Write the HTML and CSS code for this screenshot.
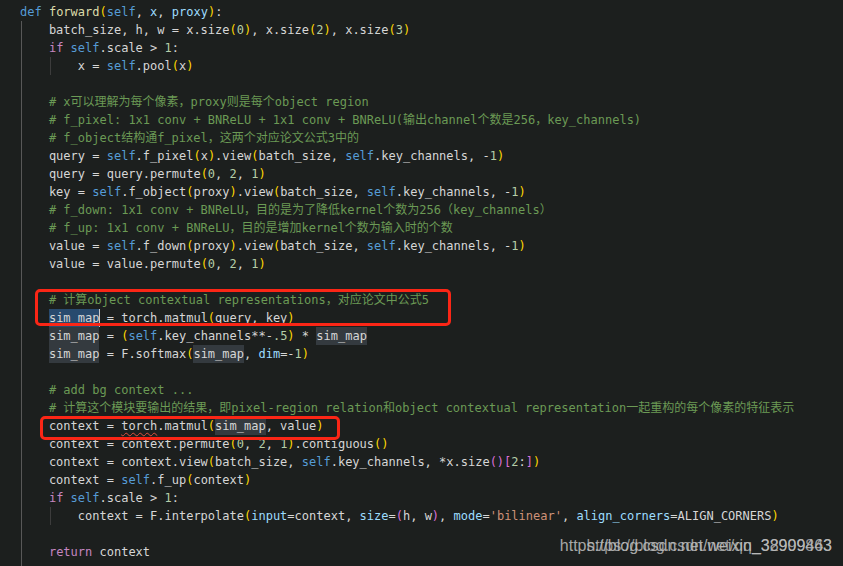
FILE: index.html
```html
<!DOCTYPE html>
<html>
<head>
<meta charset="utf-8">
<link rel="stylesheet" href="styles.css">
</head>
<body>
<div class="editor">
  <div class="code">
    <div class="ln"><span class="k">def</span> <span class="f">forward</span><span class="p1">(</span><span class="k">self</span>, <span class="a">x</span>, <span class="a">proxy</span><span class="p1">)</span>:</div>
    <div class="body">
      <div class="ln">    batch_size, h, w = x.size<span class="p1">(</span><span class="n">0</span><span class="p1">)</span>, x.size<span class="p1">(</span><span class="n">2</span><span class="p1">)</span>, x.size<span class="p1">(</span><span class="n">3</span><span class="p1">)</span></div>
      <div class="ln">    <span class="c">if</span> <span class="k">self</span>.scale &gt; <span class="n">1</span>:</div>
      <div class="nest">
        <div class="ln">        x = <span class="k">self</span>.pool<span class="p1">(</span>x<span class="p1">)</span></div>
      </div>
      <div class="ln"> </div>
      <div class="ln">    <span class="cm"># x可以理解为每个像素，proxy则是每个object region</span></div>
      <div class="ln">    <span class="cm"># f_pixel: 1x1 conv + BNReLU + 1x1 conv + BNReLU(输出channel个数是256，key_channels)</span></div>
      <div class="ln">    <span class="cm"># f_object结构通f_pixel，这两个对应论文公式3中的</span></div>
      <div class="ln">    query = <span class="k">self</span>.f_pixel<span class="p1">(</span>x<span class="p1">)</span>.view<span class="p1">(</span>batch_size, <span class="k">self</span>.key_channels, -<span class="n">1</span><span class="p1">)</span></div>
      <div class="ln">    query = query.permute<span class="p1">(</span><span class="n">0</span>, <span class="n">2</span>, <span class="n">1</span><span class="p1">)</span></div>
      <div class="ln">    key = <span class="k">self</span>.f_object<span class="p1">(</span>proxy<span class="p1">)</span>.view<span class="p1">(</span>batch_size, <span class="k">self</span>.key_channels, -<span class="n">1</span><span class="p1">)</span></div>
      <div class="ln">    <span class="cm"># f_down: 1x1 conv + BNReLU，目的是为了降低kernel个数为256（key_channels）</span></div>
      <div class="ln">    <span class="cm"># f_up: 1x1 conv + BNReLU，目的是增加kernel个数为输入时的个数</span></div>
      <div class="ln">    value = <span class="k">self</span>.f_down<span class="p1">(</span>proxy<span class="p1">)</span>.view<span class="p1">(</span>batch_size, <span class="k">self</span>.key_channels, -<span class="n">1</span><span class="p1">)</span></div>
      <div class="ln">    value = value.permute<span class="p1">(</span><span class="n">0</span>, <span class="n">2</span>, <span class="n">1</span><span class="p1">)</span></div>
      <div class="ln"> </div>
      <div class="ln">    <span class="cm"># 计算object contextual representations，对应论文中公式5</span></div>
      <div class="ln">    <span class="sel">sim_map</span> = torch.matmul<span class="p1">(</span>query, key<span class="p1">)</span></div>
      <div class="ln">    <span class="hl">sim_map</span> = <span class="p1">(</span><span class="k">self</span>.key_channels**-<span class="n">.5</span><span class="p1">)</span> * <span class="hl">sim_map</span></div>
      <div class="ln">    <span class="hl">sim_map</span> = F.softmax<span class="p1">(</span><span class="hl">sim_map</span>, <span class="a">dim</span>=-<span class="n">1</span><span class="p1">)</span></div>
      <div class="ln"> </div>
      <div class="ln">    <span class="cm"># add bg context ...</span></div>
      <div class="ln">    <span class="cm"># 计算这个模块要输出的结果，即pixel-region relation和object contextual representation一起重构的每个像素的特征表示</span></div>
      <div class="ln">    context = <span class="sq">torch</span>.matmul<span class="p1">(</span><span class="hl">sim_map</span>, value<span class="p1">)</span></div>
      <div class="ln">    context = context.permute<span class="p1">(</span><span class="n">0</span>, <span class="n">2</span>, <span class="n">1</span><span class="p1">)</span>.contiguous<span class="p1">()</span></div>
      <div class="ln">    context = context.view<span class="p1">(</span>batch_size, <span class="k">self</span>.key_channels, *x.size<span class="p2">()[</span><span class="n">2</span>:<span class="p2">]</span><span class="p1">)</span></div>
      <div class="ln">    context = <span class="k">self</span>.f_up<span class="p1">(</span>context<span class="p1">)</span></div>
      <div class="ln">    <span class="c">if</span> <span class="k">self</span>.scale &gt; <span class="n">1</span>:</div>
      <div class="nest">
        <div class="ln">        context = F.interpolate<span class="p1">(</span><span class="a">input</span>=context, <span class="a">size</span>=<span class="p2">(</span>h, w<span class="p2">)</span>, <span class="a">mode</span>=<span class="s">'bilinear'</span>, <span class="a">align_corners</span>=ALIGN_CORNERS<span class="p1">)</span></div>
      </div>
      <div class="ln"> </div>
      <div class="ln">    <span class="c">return</span> context</div>
      <div class="ln"> </div>
    </div>
  </div>
  <div class="box box-a"></div>
  <div class="box box-b"></div>
  <div class="wm">
    <span class="wm-a">https://blog.csdn.net/weixin_38909463</span>
    <span class="wm-b">https://blog.csdn.net/qq_32999843</span>
  </div>
</div>
</body>
</html>
```
FILE: styles.css
```css
html, body {
  margin: 0;
  padding: 0;
  background: #1c1f1e;
}

.editor {
  position: relative;
  width: 843px;
  height: 566px;
  overflow: hidden;
  background: #1c1f1e;
}

.code {
  padding: 3px 0 0 20px;
  font-family: "DejaVu Sans Mono", "Noto Sans CJK SC", monospace;
  font-size: 12px;
  color: #d6d6d6;
}

.ln {
  height: 18px;
  line-height: 18px;
  white-space: pre;
}

.body {
  background: linear-gradient(#585858, #585858) no-repeat 1px 0 / 1px 100%;
}

.nest {
  background: linear-gradient(#3c3c3c, #3c3c3c) no-repeat 30px 0 / 1px 100%;
}

.k { color: #569cd6; }
.c { color: #c586c0; }
.f { color: #dcdcaa; }
.a { color: #9cdcfe; }
.n { color: #b5cea8; }
.s { color: #ce9178; }
.cm { color: #6b9a55; }
.p1 { color: #ffd700; }
.p2 { color: #da70d6; }

.hl {
  display: inline-block;
  height: 18px;
  background: #343a3f;
}

.sel {
  display: inline-block;
  height: 18px;
  background: #284a6e;
  box-shadow: 1px 0 0 #c8c8c8;
}

.sq {
  text-decoration: underline wavy #e0503e;
  text-decoration-thickness: 1px;
  text-underline-offset: 2px;
}

.box {
  position: absolute;
  border: 3px solid #fb2616;
  border-radius: 5px;
}

.box-a {
  left: 35px;
  top: 289px;
  width: 410px;
  height: 31px;
}

.box-b {
  left: 40px;
  top: 416px;
  width: 294px;
  height: 18px;
}

.wm {
  position: absolute;
  right: 11px;
  top: 536px;
  display: grid;
  font-family: "Liberation Sans", Arial, sans-serif;
  font-size: 16px;
  line-height: 20px;
  color: rgba(205, 205, 205, 0.8);
}

.wm-a, .wm-b {
  grid-area: 1 / 1;
  justify-self: end;
}

.wm-b {
  color: rgba(190, 190, 190, 0.75);
}
```
